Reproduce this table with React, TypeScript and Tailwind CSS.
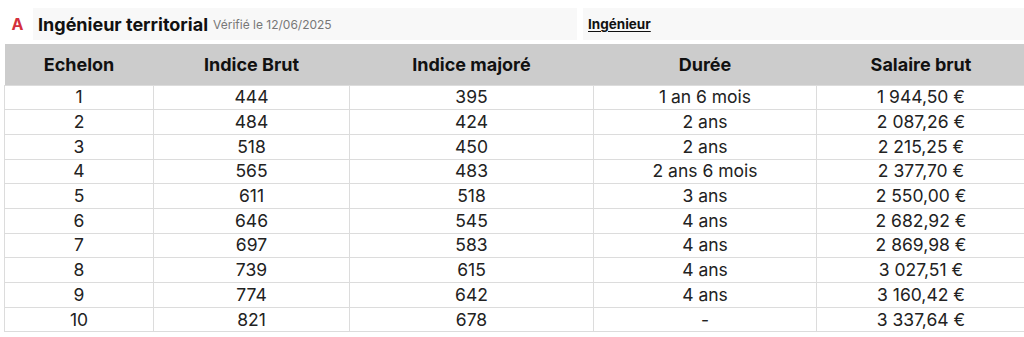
import React from "react";

const rows: [string, string, string, string, string][] = [
  ["1", "444", "395", "1 an 6 mois", "1 944,50 €"],
  ["2", "484", "424", "2 ans", "2 087,26 €"],
  ["3", "518", "450", "2 ans", "2 215,25 €"],
  ["4", "565", "483", "2 ans 6 mois", "2 377,70 €"],
  ["5", "611", "518", "3 ans", "2 550,00 €"],
  ["6", "646", "545", "4 ans", "2 682,92 €"],
  ["7", "697", "583", "4 ans", "2 869,98 €"],
  ["8", "739", "615", "4 ans", "3 027,51 €"],
  ["9", "774", "642", "4 ans", "3 160,42 €"],
  ["10", "821", "678", "-", "3 337,64 €"],
];

export default function App() {
  return (
    <div className="bg-white w-[1024px] h-[337px] overflow-hidden text-[#111] font-['Inter',sans-serif]">
      <div className="flex items-stretch pt-[8px] h-[40px]">
        <div className="w-[33px] flex items-center justify-center">
          <span className="text-[#d4303c] font-bold text-[16px] pl-[2px]">A</span>
        </div>
        <div className="w-[544px] bg-[#f8f8f8] flex items-center pl-[5px]">
          <span className="font-bold text-[18px] text-[#111]">Ingénieur territorial</span>
          <span className="text-[12px] text-[#777] ml-[5px] mt-[2px]">Vérifié le 12/06/2025</span>
        </div>
        <div className="w-[6px]" />
        <div className="flex-1 bg-[#f8f8f8] flex items-center pl-[5px]">
          <span className="font-bold text-[13.5px] underline underline-offset-2 text-[#111]">Ingénieur</span>
        </div>
      </div>
      <div className="pl-[4px] pt-[4px]">
        <table className="border-collapse w-[1021px] table-fixed">
          <colgroup>
            <col className="w-[149px]" />
            <col className="w-[196px]" />
            <col className="w-[244px]" />
            <col className="w-[223px]" />
            <col className="w-[209px]" />
          </colgroup>
          <thead>
            <tr className="bg-[#cccccc] h-[41px]">
              {["Echelon", "Indice Brut", "Indice majoré", "Durée", "Salaire brut"].map((h) => (
                <th key={h} className="font-bold text-[18px] text-center text-[#111] p-0">
                  {h}
                </th>
              ))}
            </tr>
          </thead>
          <tbody>
            {rows.map((r) => (
              <tr key={r[0]} className="h-[24.7px]">
                {r.map((c, i) => (
                  <td
                    key={i}
                    className="border border-[#dcdcdc] text-center text-[17.5px] leading-[20px] p-0 text-[#222]"
                  >
                    {c}
                  </td>
                ))}
              </tr>
            ))}
          </tbody>
        </table>
      </div>
    </div>
  );
}
